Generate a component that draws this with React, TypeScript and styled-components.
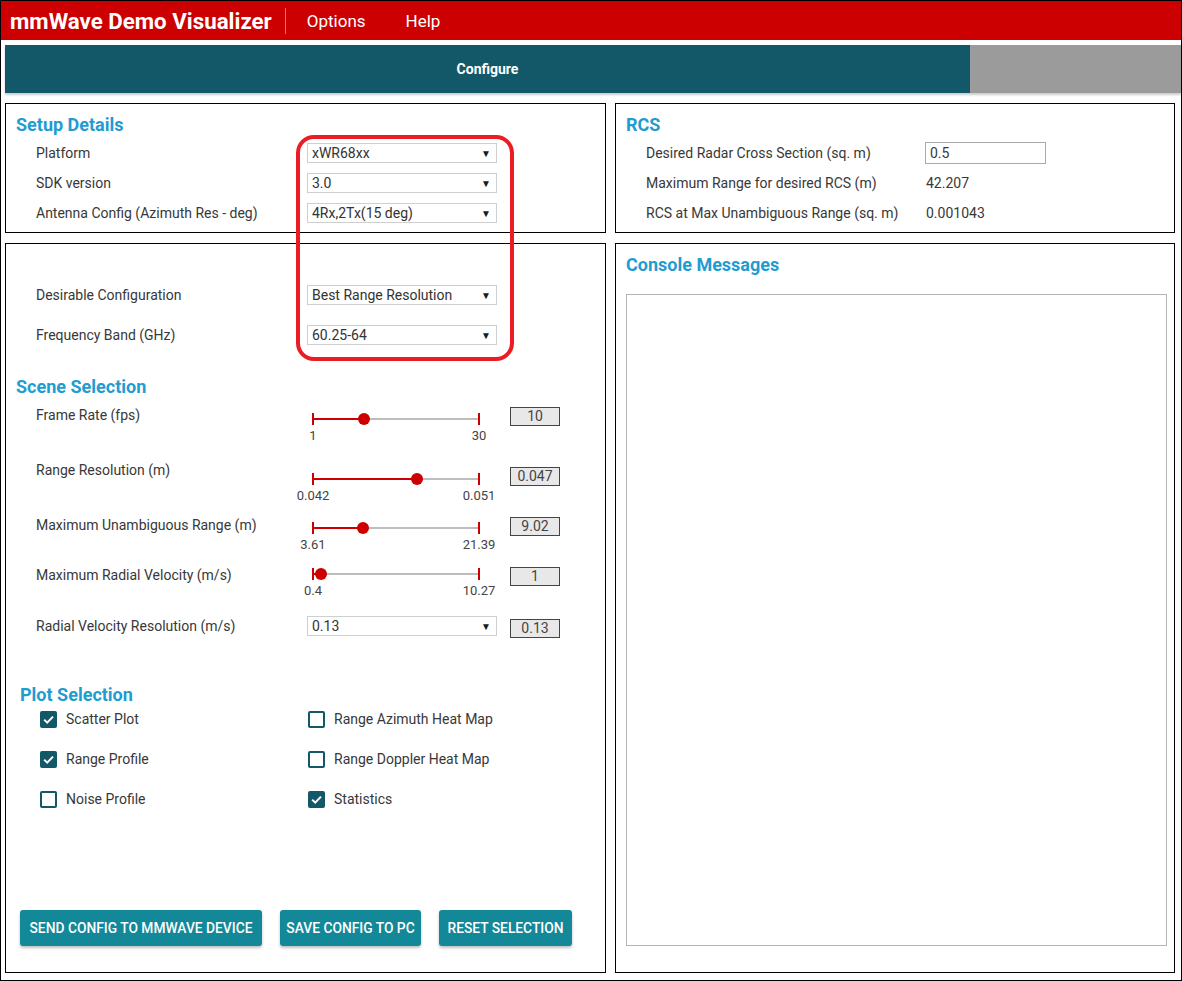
import styled, { createGlobalStyle } from "styled-components";

const GlobalStyle = createGlobalStyle`
  html, body {
    margin: 0;
    padding: 0;
    background: #fff;
  }
  body {
    font-family: Roboto, "Noto Sans", "Liberation Sans", sans-serif;
    color: #383838;
  }
  * {
    box-sizing: border-box;
  }
`;

const Page = styled.div`
  position: relative;
  width: 1182px;
  height: 981px;
  border: 1px solid #000;
  display: flex;
  flex-direction: column;
`;

const Header = styled.header`
  height: 39px;
  background: #cc0000;
  display: flex;
  align-items: center;
  padding-left: 9px;
  color: #fff;
`;

const AppTitle = styled.h1`
  margin: 0;
  font-size: 22.3px;
  font-weight: 700;
`;

const Divider = styled.span`
  width: 1px;
  height: 26px;
  background: rgba(255, 255, 255, 0.45);
  margin: 0 21px 0 13px;
`;

const MenuItem = styled.span`
  font-size: 17px;
  margin-right: 40px;
`;

const TabBar = styled.nav`
  margin: 5px 0 0 4px;
  height: 48px;
  display: flex;
  flex-shrink: 0;
  box-shadow: 0 2px 2px rgba(0, 0, 0, 0.2);
`;

const Tab = styled.div<{ $active?: boolean }>`
  width: ${(p) => (p.$active ? "965px" : "auto")};
  flex: ${(p) => (p.$active ? "none" : "1")};
  background: ${(p) => (p.$active ? "#135868" : "#9b9b9c")};
  color: #fff;
  font-size: 14px;
  font-weight: 700;
  display: flex;
  align-items: center;
  justify-content: center;
`;

const Main = styled.main`
  margin: 10px 6px 0 4px;
  display: grid;
  grid-template-columns: 601px 560px;
  grid-template-rows: 130px 730px;
  column-gap: 9px;
  row-gap: 10px;
`;

const Panel = styled.section`
  border: 1px solid #000;
  padding: 10px 10px 0;
  display: flex;
  flex-direction: column;
  min-height: 0;

  & > * {
    flex-shrink: 0;
  }
`;

const Heading = styled.h2<{ $indent?: number; $top?: number }>`
  margin: ${(p) => p.$top ?? 0}px 0 0 ${(p) => p.$indent ?? 0}px;
  font-size: 18px;
  line-height: 22px;
  font-weight: 700;
  color: #1f9cd0;
`;

const FieldRow = styled.div<{ $h: number; $top?: number }>`
  display: grid;
  grid-template-columns: 258px 190px 50px;
  column-gap: 13px;
  align-items: center;
  height: ${(p) => p.$h}px;
  margin-top: ${(p) => p.$top ?? 0}px;
  padding-left: 20px;
`;

const RcsRow = styled.div<{ $top?: number }>`
  display: grid;
  grid-template-columns: 279px 121px;
  align-items: center;
  height: 30px;
  margin-top: ${(p) => p.$top ?? 0}px;
  padding-left: 20px;
`;

const Label = styled.span`
  font-size: 14px;
  line-height: 20px;
`;

const SelectBox = styled.div`
  height: 20px;
  border: 1px solid #cfcfcf;
  padding: 0 5px 0 4px;
  display: flex;
  align-items: center;
  justify-content: space-between;
  font-size: 14px;
  color: #333;
  background: #fff;
`;

const Caret = styled.span`
  font-size: 10px;
  color: #1a1a1a;
`;

const TextInput = styled.div`
  height: 22px;
  border: 1px solid #aaa;
  padding: 0 4px;
  display: flex;
  align-items: center;
  font-size: 14px;
`;

const Value = styled.span`
  font-size: 14px;
  padding-left: 1px;
`;

const SliderRow = styled.div<{ $h: number }>`
  display: grid;
  grid-template-columns: 258px 190px 50px;
  column-gap: 13px;
  align-items: start;
  height: ${(p) => p.$h}px;
  padding-left: 20px;
`;

const SliderLabel = styled(Label)<{ $top: number }>`
  margin-top: ${(p) => p.$top}px;
`;

const SliderCell = styled.div<{ $top: number }>`
  padding: ${(p) => p.$top}px 18px 0 6px;
`;

const Track = styled.div`
  position: relative;
  height: 2px;
  background: #bdbdbd;
`;

const Fill = styled.div`
  position: absolute;
  left: 0;
  top: 0;
  height: 2px;
  background: #cc0000;
`;

const Tick = styled.span<{ $end?: boolean }>`
  position: absolute;
  top: -5px;
  ${(p) => (p.$end ? "right: -1px;" : "left: -1px;")}
  width: 2px;
  height: 12px;
  background: #cc0000;
`;

const Thumb = styled.span`
  position: absolute;
  top: -5px;
  width: 12px;
  height: 12px;
  margin-left: -6px;
  border-radius: 50%;
  background: #cc0000;
`;

const Limits = styled.div`
  display: flex;
  justify-content: space-between;
  margin: 8px -30px 0;
  font-size: 13px;
  line-height: 16px;
  color: #444;
`;

const Limit = styled.span`
  width: 60px;
  text-align: center;
`;

const ValueBox = styled.div`
  margin-top: 4px;
  height: 19px;
  border: 1px solid #444;
  background: #e8e8e8;
  font-size: 14px;
  line-height: 17px;
  text-align: center;
  color: #444;
`;

const CheckGrid = styled.div`
  display: grid;
  grid-template-columns: 268px 1fr;
  grid-auto-rows: 20px;
  row-gap: 20px;
  margin-top: 3px;
  padding-left: 24px;
`;

const CheckItem = styled.label`
  display: flex;
  align-items: center;
  gap: 9px;
  font-size: 14px;
`;

const Box = styled.span<{ $checked?: boolean }>`
  width: 17px;
  height: 17px;
  border: 2px solid #135868;
  border-radius: 2px;
  background: ${(p) => (p.$checked ? "#135868" : "#fff")};
  display: flex;
  align-items: center;
  justify-content: center;
`;

const ButtonRow = styled.div`
  margin: auto 0 26px 4px;
  display: flex;
  gap: 18px;
`;

const Button = styled.button<{ $w: number }>`
  width: ${(p) => p.$w}px;
  height: 36px;
  padding: 0;
  border: none;
  border-radius: 3px;
  background: #138899;
  color: #fff;
  font-family: inherit;
  font-size: 13.8px;
  font-weight: 500;
  text-transform: uppercase;
  white-space: nowrap;
  box-shadow: 0 2px 3px rgba(0, 0, 0, 0.25);
`;

const ConsoleBox = styled.div`
  flex: 1 1 auto;
  margin: 18px -3px 26px 0;
  border: 1px solid #b4b4b4;
`;

const Highlight = styled.div`
  position: absolute;
  left: 295px;
  top: 134px;
  width: 218px;
  height: 226px;
  border: 4px solid #ec1c24;
  border-radius: 18px;
  pointer-events: none;
`;

const Select = ({ value }: { value: string }) => (
  <SelectBox>
    <span>{value}</span>
    <Caret>▼</Caret>
  </SelectBox>
);

type SliderProps = {
  label: string;
  min: string;
  max: string;
  value: string;
  pos: number;
  h: number;
  labelTop?: number;
  trackTop?: number;
};

const Slider = ({ label, min, max, value, pos, h, labelTop = 2, trackTop = 15 }: SliderProps) => (
  <SliderRow $h={h}>
    <SliderLabel $top={labelTop}>{label}</SliderLabel>
    <SliderCell $top={trackTop}>
      <Track>
        <Fill style={{ width: `${pos}%` }} />
        <Tick />
        <Tick $end />
        <Thumb style={{ left: `${pos}%` }} />
      </Track>
      <Limits>
        <Limit>{min}</Limit>
        <Limit>{max}</Limit>
      </Limits>
    </SliderCell>
    <ValueBox>{value}</ValueBox>
  </SliderRow>
);

const Check = ({ label, checked }: { label: string; checked?: boolean }) => (
  <CheckItem>
    <Box $checked={checked}>
      {checked && (
        <svg width="13" height="13" viewBox="0 0 13 13">
          <polyline
            points="2.2 6.6 5.2 9.6 11 3.6"
            fill="none"
            stroke="#fff"
            strokeWidth="2"
          />
        </svg>
      )}
    </Box>
    {label}
  </CheckItem>
);

const App = () => (
  <>
    <GlobalStyle />
    <Page>
      <Header>
        <AppTitle>mmWave Demo Visualizer</AppTitle>
        <Divider />
        <MenuItem>Options</MenuItem>
        <MenuItem>Help</MenuItem>
      </Header>
      <TabBar>
        <Tab $active>Configure</Tab>
        <Tab />
      </TabBar>
      <Main>
        <Panel>
          <Heading>Setup Details</Heading>
          <FieldRow $h={30} $top={2}>
            <Label>Platform</Label>
            <Select value="xWR68xx" />
          </FieldRow>
          <FieldRow $h={30}>
            <Label>SDK version</Label>
            <Select value="3.0" />
          </FieldRow>
          <FieldRow $h={30}>
            <Label>Antenna Config (Azimuth Res - deg)</Label>
            <Select value="4Rx,2Tx(15 deg)" />
          </FieldRow>
        </Panel>
        <Panel>
          <Heading>RCS</Heading>
          <RcsRow $top={2}>
            <Label>Desired Radar Cross Section (sq. m)</Label>
            <TextInput>0.5</TextInput>
          </RcsRow>
          <RcsRow>
            <Label>Maximum Range for desired RCS (m)</Label>
            <Value>42.207</Value>
          </RcsRow>
          <RcsRow>
            <Label>RCS at Max Unambiguous Range (sq. m)</Label>
            <Value>0.001043</Value>
          </RcsRow>
        </Panel>
        <Panel>
          <FieldRow $h={40} $top={21}>
            <Label>Desirable Configuration</Label>
            <Select value="Best Range Resolution" />
          </FieldRow>
          <FieldRow $h={40}>
            <Label>Frequency Band (GHz)</Label>
            <Select value="60.25-64" />
          </FieldRow>
          <Heading $top={21}>Scene Selection</Heading>
          <div style={{ height: 5 }} />
          <Slider label="Frame Rate (fps)" min="1" max="30" value="10" pos={30.7} h={60} />
          <Slider label="Range Resolution (m)" min="0.042" max="0.051" value="0.047" pos={62.7} h={50} labelTop={-3} />
          <Slider label="Maximum Unambiguous Range (m)" min="3.61" max="21.39" value="9.02" pos={30.1} h={50} trackTop={14} />
          <Slider label="Maximum Radial Velocity (m/s)" min="0.4" max="10.27" value="1" pos={4.8} h={51} trackTop={10} />
          <FieldRow $h={24}>
            <Label>Radial Velocity Resolution (m/s)</Label>
            <Select value="0.13" />
            <ValueBox>0.13</ValueBox>
          </FieldRow>
          <Heading $top={46} $indent={4}>
            Plot Selection
          </Heading>
          <CheckGrid>
            <Check label="Scatter Plot" checked />
            <Check label="Range Azimuth Heat Map" />
            <Check label="Range Profile" checked />
            <Check label="Range Doppler Heat Map" />
            <Check label="Noise Profile" />
            <Check label="Statistics" checked />
          </CheckGrid>
          <ButtonRow>
            <Button $w={242}>Send config to mmWave device</Button>
            <Button $w={141}>Save config to PC</Button>
            <Button $w={133}>Reset selection</Button>
          </ButtonRow>
        </Panel>
        <Panel>
          <Heading>Console Messages</Heading>
          <ConsoleBox />
        </Panel>
      </Main>
      <Highlight />
    </Page>
  </>
);

export default App;
